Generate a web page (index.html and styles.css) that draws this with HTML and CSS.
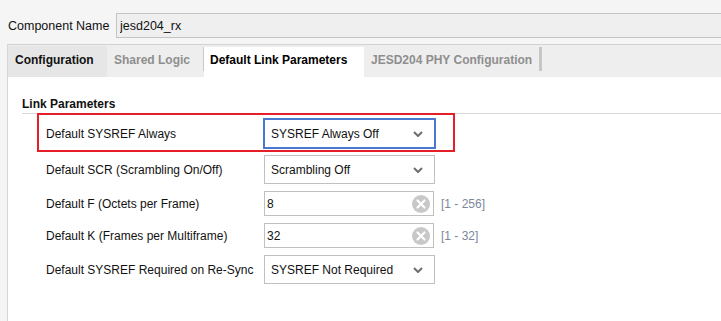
FILE: index.html
```html
<!DOCTYPE html>
<html lang="en">
<head>
  <meta charset="UTF-8" />
  <title>Customize IP - JESD204</title>
  <link rel="stylesheet" href="styles.css">
</head>
<body>
  <div class="name-row">
    <label class="name-label" for="compName">Component Name</label>
    <input class="name-input" id="compName" type="text" value="jesd204_rx" />
  </div>

  <div class="panel">
    <div class="tabs">
      <div class="tab tab-config">Configuration</div>
      <div class="tab tab-shared disabled">Shared Logic</div>
      <span class="tab-sep"></span>
      <div class="tab tab-link active">Default Link Parameters</div>
      <div class="tab tab-phy disabled">JESD204 PHY Configuration</div>
      <span class="tab-sep thick"></span>
    </div>

    <div class="content">
      <div class="section-title">Link Parameters</div>

      <div class="rows">
        <div class="row">
          <span class="row-label">Default SYSREF Always</span>
          <div class="select focused">
            <span>SYSREF Always Off</span>
            <svg class="chevron" width="10" height="6" viewBox="0 0 10 6"><polyline points="1,1 5,5 9,1" fill="none" stroke="#6e6e6e" stroke-width="2"/></svg>
          </div>
        </div>
        <div class="row">
          <span class="row-label">Default SCR (Scrambling On/Off)</span>
          <div class="select">
            <span>Scrambling Off</span>
            <svg class="chevron" width="10" height="6" viewBox="0 0 10 6"><polyline points="1,1 5,5 9,1" fill="none" stroke="#6e6e6e" stroke-width="2"/></svg>
          </div>
        </div>
        <div class="row">
          <span class="row-label">Default F (Octets per Frame)</span>
          <div class="field">
            <span>8</span>
            <svg class="clear" width="18" height="18" viewBox="0 0 18 18"><circle cx="9" cy="9" r="9" fill="#c8c8c8"/><path d="M5.5 5.5 L12.5 12.5 M12.5 5.5 L5.5 12.5" stroke="#fff" stroke-width="2.2" stroke-linecap="round"/></svg>
          </div>
          <span class="range">[1 - 256]</span>
        </div>
        <div class="row">
          <span class="row-label">Default K (Frames per Multiframe)</span>
          <div class="field">
            <span>32</span>
            <svg class="clear" width="18" height="18" viewBox="0 0 18 18"><circle cx="9" cy="9" r="9" fill="#c8c8c8"/><path d="M5.5 5.5 L12.5 12.5 M12.5 5.5 L5.5 12.5" stroke="#fff" stroke-width="2.2" stroke-linecap="round"/></svg>
          </div>
          <span class="range">[1 - 32]</span>
        </div>
        <div class="row">
          <span class="row-label">Default SYSREF Required on Re-Sync</span>
          <div class="select">
            <span>SYSREF Not Required</span>
            <svg class="chevron" width="10" height="6" viewBox="0 0 10 6"><polyline points="1,1 5,5 9,1" fill="none" stroke="#6e6e6e" stroke-width="2"/></svg>
          </div>
        </div>
      </div>

      <div class="highlight"></div>
    </div>
  </div>
</body>
</html>
```

FILE: styles.css
```css
body {
  margin: 0;
  height: 100vh;
  display: flex;
  flex-direction: column;
  background: #f5f5f5;
  font-family: "Liberation Sans", Arial, sans-serif;
  font-size: 12px;
  color: #111;
  overflow: hidden;
}

.name-row {
  display: flex;
  align-items: center;
  padding: 13px 0 0 8px;
  margin-right: -6px;
}

.name-label {
  width: 108px;
  font-size: 12.5px;
}

.name-input {
  flex: 1;
  height: 25px;
  box-sizing: border-box;
  margin: 0;
  padding: 0 3px;
  border: 1px solid #c4c4c4;
  background: #efefef;
  font-family: inherit;
  font-size: 12.5px;
  color: #111;
  outline: none;
}

.panel {
  flex: 1;
  display: flex;
  flex-direction: column;
  margin: 6px 0 0 7px;
  border-top: 1px solid #d2d2d2;
  border-left: 1px solid #d6d6d6;
}

.tabs {
  display: flex;
  align-items: flex-start;
  padding-top: 2px;
  background: #eeeeee;
}

.tab {
  height: 30px;
  line-height: 27px;
  padding-left: 7px;
  box-sizing: border-box;
  font-weight: bold;
  white-space: nowrap;
}

.tab-config { width: 99px; background: #e6e6e6; margin-top: -1px; height: 31px; line-height: 29px; }
.tab-shared { width: 96px; }
.tab-link { width: 160px; padding-left: 6px; }
.tab-phy { width: 175px; }

.tab.active {
  background: #fff;
  color: #000;
}

.tab.disabled {
  color: #8e8e8e;
}

.tab-sep {
  width: 1px;
  height: 24px;
  background: #c8c8c8;
}

.tab-sep.thick {
  width: 3px;
  background: #c6c6c6;
}

.content {
  flex: 1;
  position: relative;
  background: #fff;
  padding-left: 14px;
}

.section-title {
  margin-top: 20px;
  padding-bottom: 2px;
  border-bottom: 1px solid #d8d8d8;
  font-weight: bold;
  line-height: 14px;
}

.rows {
  display: flex;
  flex-direction: column;
  gap: 7px;
  padding: 5px 0 0 24px;
}

.row {
  display: flex;
  align-items: center;
}

.row-label {
  width: 218px;
  white-space: nowrap;
}

.select {
  width: 171px;
  height: 29px;
  box-sizing: border-box;
  display: flex;
  align-items: center;
  justify-content: space-between;
  padding: 0 11px 0 6px;
  border: 1px solid #c0c0c0;
  background: #fff;
}

.select.focused {
  border-color: #4a78cf;
  box-shadow: 0 0 0 1px #4a78cf;
}

.chevron {
  display: block;
}

.field {
  width: 170px;
  height: 25px;
  box-sizing: border-box;
  display: flex;
  align-items: center;
  justify-content: space-between;
  padding: 0 3px 0 2px;
  border: 1px solid #c0c0c0;
  background: #fff;
}

.clear {
  display: block;
}

.range {
  margin-left: 7px;
  color: #7b879b;
}

.highlight {
  position: absolute;
  left: 29px;
  top: 36px;
  width: 418px;
  height: 39px;
  box-sizing: border-box;
  border: 2px solid #e61e27;
  pointer-events: none;
}
```
